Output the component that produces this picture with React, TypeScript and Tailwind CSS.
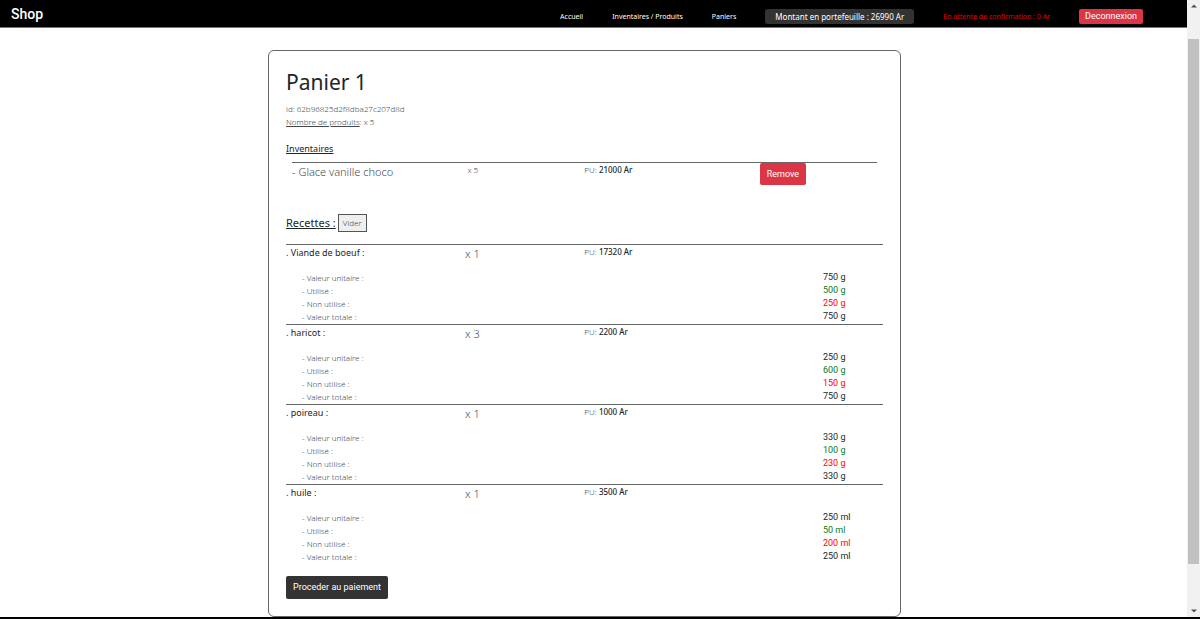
import React from "react";

type Recipe = { name: string; count: number; price: string; values: string[] };

const recipes: Recipe[] = [
  { name: "Viande de boeuf", count: 1, price: "17320 Ar", values: ["750 g", "500 g", "250 g", "750 g"] },
  { name: "haricot", count: 3, price: "2200 Ar", values: ["250 g", "600 g", "150 g", "750 g"] },
  { name: "poireau", count: 1, price: "1000 Ar", values: ["330 g", "100 g", "230 g", "330 g"] },
  { name: "huile", count: 1, price: "3500 Ar", values: ["250 ml", "50 ml", "200 ml", "250 ml"] },
];

const lines = [
  { label: "Valeur unitaire", tone: "text-[#212529]" },
  { label: "Utilisé", tone: "text-[#087a1b]" },
  { label: "Non utilisé", tone: "text-[#ff0000]" },
  { label: "Valeur totale", tone: "text-[#212529]" },
];

function Header() {
  return (
    <header className="flex h-7 items-center border-b border-[#777777] bg-black pr-11 pl-[11px] font-normal text-white">
      <a href="#" className="font-['Roboto',sans-serif] text-[14px] leading-5 font-medium">Shop</a>
      <nav className="ml-auto flex items-center gap-[29px] pt-[5px] text-[7px] leading-[15px] whitespace-nowrap">
        <a href="#accueil">Accueil</a>
        <a href="#produits">Inventaires / Produits</a>
        <a href="#paniers">Paniers</a>
        <span className="rounded-[3px] bg-[#333333] px-2.5 text-[8px]">Montant en portefeuille : 26990 Ar</span>
        <span className="text-[#e00000]">En attente de confirmation : 0 Ar</span>
        <button type="button" className="rounded-[2px] bg-[#dc3545] px-1.5 font-['Roboto',sans-serif] text-[9px]">Deconnexion</button>
      </nav>
    </header>
  );
}

function Price({ value }: { value: string }) {
  return (
    <p className="col-span-3 text-[8px] leading-[13px]">
      PU: <span className="font-medium text-[#212529]">{value}</span>
    </p>
  );
}

function RecipeRow({ recipe }: { recipe: Recipe }) {
  return (
    <li className="h-20 border-t border-[#666666]">
      <div className="grid h-[26px] grid-cols-10 items-start">
        <h3 className="col-span-3 text-[9px] leading-[15px] font-normal text-[#212529]">. {recipe.name} :</h3>
        <p className="col-span-2 text-[11px] leading-[18px]">x {recipe.count}</p>
        <Price value={recipe.price} />
      </div>
      <dl className="text-[8px] leading-[13px]">
        {lines.map((line, i) => (
          <div key={line.label} className="grid grid-cols-10">
            <dt className="col-span-9 pl-4">- {line.label} :</dt>
            <dd className={`font-['Roboto',sans-serif] text-[9px] font-normal ${line.tone}`}>{recipe.values[i]}</dd>
          </div>
        ))}
      </dl>
    </li>
  );
}

function Cart() {
  return (
    <section className="mt-[22px] ml-[22.58%] w-[53.3%] rounded-md border border-[#666666] px-[17px] pt-[17px] pb-[17px]">
      <h1 className="text-[21px] leading-7 font-normal text-[#212529]">Panier 1</h1>
      <div className="mt-1.5 text-[8px] leading-[13px]">
        <p>id: 62b96825d2f8dba27c207d8d</p>
        <p><span className="underline">Nombre de produits</span>: x 5</p>
      </div>
      <h2 className="mt-3.5 text-[9px] leading-[13px] font-normal text-[#212529] underline">Inventaires</h2>
      <ul className="mx-1.5 mt-[7px]">
        <li className="grid grid-cols-10 items-start border-t border-[#666666]">
          <p className="col-span-3 text-[11px] leading-[18px]">- Glace vanille choco</p>
          <p className="col-span-2 text-[8px] leading-[13px]">x 5</p>
          <Price value="21000 Ar" />
          <button type="button" className="col-span-2 justify-self-start rounded-[2px] bg-[#dc3545] px-[7px] font-['Roboto',sans-serif] text-[9px] leading-[22px] font-normal text-white">Remove</button>
        </li>
      </ul>
      <div className="mt-[29px] flex items-center gap-0.5">
        <h2 className="text-[11px] leading-4 font-normal text-[#212529] underline">Recettes :</h2>
        <button type="button" className="border border-[#555555] bg-[#efefef] px-1 text-[8px] leading-4">Vider</button>
      </div>
      <ul className="mt-3">
        {recipes.map((recipe) => <RecipeRow key={recipe.name} recipe={recipe} />)}
      </ul>
      <button type="button" className="mt-3 rounded-[2px] bg-[#333333] px-[7px] font-['Roboto',sans-serif] text-[9px] leading-[23px] font-normal text-white">Proceder au paiement</button>
    </section>
  );
}

function ScrollRail() {
  return (
    <div aria-hidden="true" className="flex w-[13px] flex-col items-center bg-[#f1f1f1] py-0.5">
      <svg className="size-2" viewBox="0 0 8 8"><path d="M1 5.5 4 2.5 7 5.5Z" fill="#505050" /></svg>
      <div className="mt-[29px] w-[11px] flex-1 bg-[#c1c1c1]" />
      <svg className="mt-[43px] size-2" viewBox="0 0 8 8"><path d="M1 2.5 4 5.5 7 2.5Z" fill="#505050" /></svg>
    </div>
  );
}

export default function App() {
  return (
    <div className="flex min-h-screen flex-col border-b-2 border-black bg-white font-['Noto_Sans','Open_Sans',sans-serif] font-light text-[#43494f]">
      <div className="flex flex-1">
        <div className="min-w-0 flex-1">
          <Header />
          <main><Cart /></main>
        </div>
        <ScrollRail />
      </div>
    </div>
  );
}
